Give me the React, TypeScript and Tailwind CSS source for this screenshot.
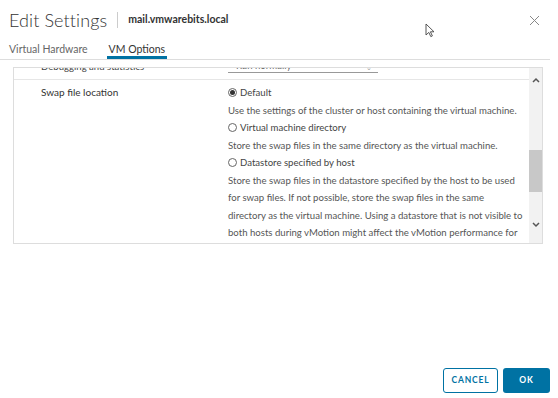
import React from "react";

const font = { fontFamily: 'Lato, "Open Sans", "Liberation Sans", sans-serif' };

function Radio({ checked }: { checked?: boolean }) {
  return (
    <span className="mr-[3px] inline-grid size-[9px] place-items-center rounded-full border border-[#666] bg-white">
      {checked && <span className="size-[5px] rounded-full bg-[#333]" />}
    </span>
  );
}

export default function App() {
  return (
    <div className="relative h-[398px] w-[558px] overflow-hidden bg-white text-[#565656]" style={font}>
      {/* En-tête */}
      <div className="flex h-[40px] items-center pl-[9px] pr-[18px]">
        <h1 className="text-[18px] font-light leading-none tracking-[0.1px] text-[#333]">Edit Settings</h1>
        <span className="mx-[10px] h-[16px] w-px bg-[#ccc]" />
        <span className="text-[10.5px] font-bold text-[#333]">mail.vmwarebits.local</span>
        <button type="button" className="ml-auto text-[#888]" aria-label="Close">
          <svg width="11" height="11" viewBox="0 0 11 11" stroke="currentColor" strokeWidth="1">
            <path d="M1 1L10 10M10 1L1 10" />
          </svg>
        </button>
      </div>

      {/* Curseur */}
      <svg className="absolute left-[425px] top-[23px]" width="10" height="15" viewBox="0 0 10 15">
        <path d="M1 1V12L3.8 9.4L5.8 13.6L7.4 12.9L5.4 8.8H9L1 1Z" fill="white" stroke="#444" strokeWidth="0.9" />
      </svg>

      {/* Onglets */}
      <div className="mr-[8px] flex h-[20px] items-start border-b border-[#ddd] pl-[9px] text-[10.5px]">
        <span className="pt-[2px] text-[#666]">Virtual Hardware</span>
        <span className="relative ml-[19px] px-[2px] pt-[2px] text-[#333]">
          VM Options
          <span className="absolute -bottom-px left-0 right-0 h-[3px] bg-[#0072a3]" />
        </span>
      </div>

      {/* Zone défilante */}
      <div className="ml-[13px] mt-[7px] flex h-[177px] w-[530px] overflow-hidden border border-[#ddd]">
        <div className="min-w-0 flex-1 overflow-hidden text-[9.6px]">
          <div className="-mt-[8px]">
            <div className="flex h-[20px] border-b border-[#e6e6e6]">
              <div className="w-[214px] shrink-0 pl-[27px] leading-[14px] text-[#444]">Debugging and statistics</div>
              <div className="relative h-[13px] w-[150px] shrink-0 border-b border-[#999] leading-[12px] text-[#666]">
                <span className="pl-[8px]">Run normally</span>
                <span className="absolute right-[6px] top-[1px] text-[7px] text-[#999]">⌄</span>
              </div>
            </div>
            <div className="flex pt-[4px] leading-[17.5px]">
              <div className="w-[214px] shrink-0 pl-[27px] text-[10px] text-[#333]">Swap file location</div>
              <div className="whitespace-nowrap">
                <div className="flex items-center text-[#444]"><Radio checked />Default</div>
                <div>Use the settings of the cluster or host containing the virtual machine.</div>
                <div className="flex items-center text-[#444]"><Radio />Virtual machine directory</div>
                <div>Store the swap files in the same directory as the virtual machine.</div>
                <div className="flex items-center text-[#444]"><Radio />Datastore specified by host</div>
                <div>Store the swap files in the datastore specified by the host to be used</div>
                <div>for swap files. If not possible, store the swap files in the same</div>
                <div>directory as the virtual machine. Using a datastore that is not visible to</div>
                <div>both hosts during vMotion might affect the vMotion performance for</div>
                <div>the affected virtual machines.</div>
              </div>
            </div>
          </div>
        </div>
        {/* Barre de défilement */}
        <div className="flex w-[13px] shrink-0 flex-col items-center bg-[#f2f2f2]">
          <svg className="mt-[9px]" width="8" height="6" viewBox="0 0 8 6" fill="none" stroke="#555" strokeWidth="1.5">
            <path d="M1 5L4 2L7 5" />
          </svg>
          <div className="mt-[67px] h-[42px] w-full bg-[#c8c8c8]" />
          <svg className="mt-[30px]" width="8" height="6" viewBox="0 0 8 6" fill="none" stroke="#555" strokeWidth="1.5">
            <path d="M1 1L4 4L7 1" />
          </svg>
        </div>
      </div>

      {/* Pied */}
      <div className="absolute bottom-[5px] right-[8px] flex gap-[5px]">
        <button type="button" className="h-[25px] w-[55px] rounded-[3px] border border-[#0072a3] text-[8.5px] font-bold tracking-[0.8px] text-[#0072a3]">
          CANCEL
        </button>
        <button type="button" className="h-[25px] w-[47px] rounded-[3px] bg-[#0072a3] text-[8.5px] font-bold tracking-[0.8px] text-white">
          OK
        </button>
      </div>
    </div>
  );
}
